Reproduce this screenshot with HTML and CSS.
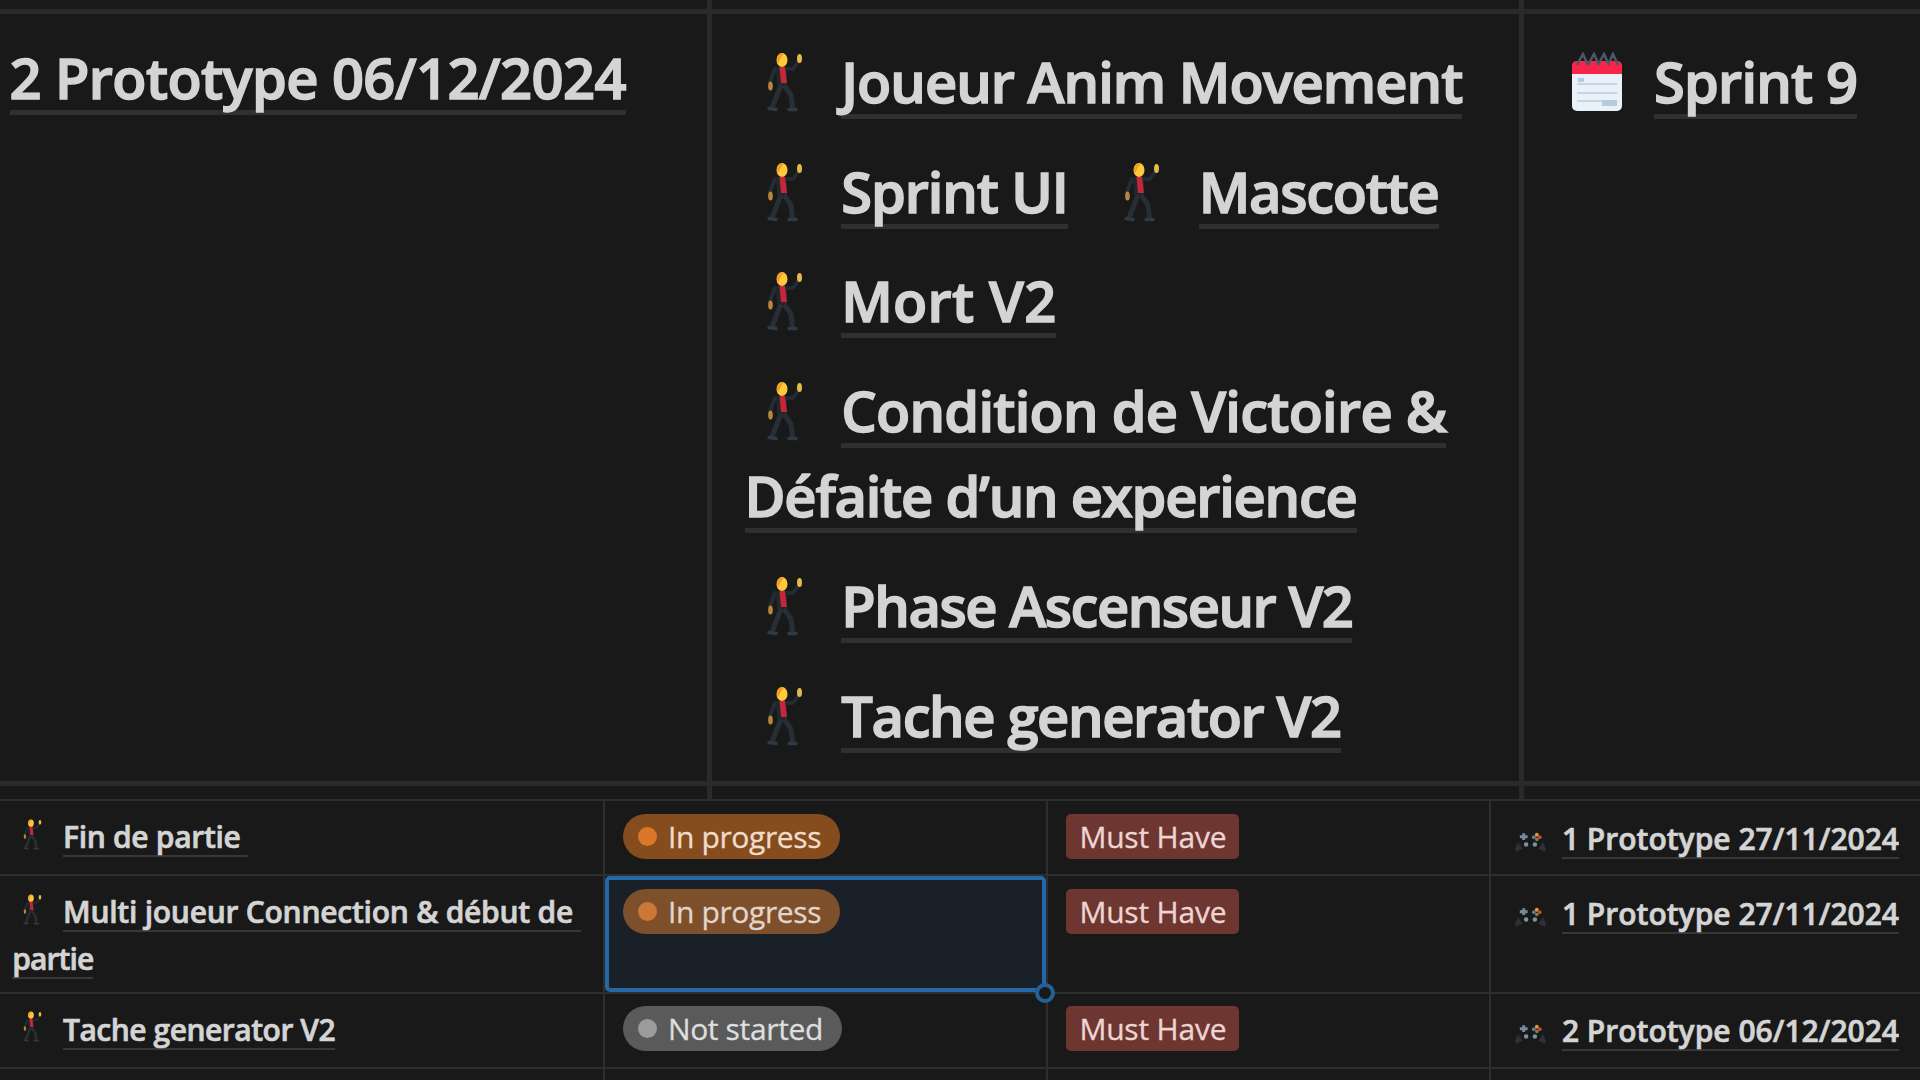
FILE: index.html
```html
<!DOCTYPE html>
<html lang="fr">
<head>
<meta charset="utf-8">
<title>Sprints</title>
<link rel="stylesheet" href="styles.css">
</head>
<body>
<svg class="defs" aria-hidden="true">
  <symbol id="dancer" viewBox="0 0 60 60">
    <path d="M18 17 L12.500 31" stroke="#232c34" stroke-width="4" stroke-linecap="round"/>
    <path d="M29 17 L36 17 L41 10" stroke="#232c34" stroke-width="3.500" fill="none" stroke-linecap="round"/>
    <path d="M19 15 H30 L30 33 H20 Z" fill="#20272d"/>
    <path d="M24 33 L20 43 L15 56 M27 33 L34 43 L35.500 56" stroke="#272e35" stroke-width="5" fill="none"/>
    <path d="M12 56.500 L19 57.500 M32 57.500 L39 57.500" stroke="#303a44" stroke-width="3.500" stroke-linecap="round"/>
    <path d="M22.500 15 H28 L30 31 H24 Z" fill="#c62638"/>
    <ellipse cx="25" cy="8" rx="5.500" ry="7" fill="#ffc83d"/>
    <path d="M20 8 Q20 1 27 1.500 L24 5 L21 12 Z" fill="#f59a23"/>
    <ellipse cx="42.500" cy="6.500" rx="2.500" ry="4.500" fill="#e5ba4a"/>
    <ellipse cx="13.500" cy="34" rx="2.300" ry="4.500" fill="#b9873a"/>
  </symbol>
  <symbol id="calendar" viewBox="0 0 60 60">
    <rect x="5" y="10" width="50" height="49" rx="5" fill="#e9f2fa"/>
    <path d="M5 22 V14 Q5 9 10 9 H50 Q55 9 55 14 V22 Z" fill="#f8254a"/>
    <path d="M10 13 L16 2 L21 13 M21 13 L27 2 L32 13 M31 13 L37 2 L42 13 M41 13 L46 2 L51 13" fill="none" stroke="#4a5965" stroke-width="2.500"/>
    <path d="M11 28 H17" stroke="#b4cbe0" stroke-width="4"/>
    <path d="M10 32 H50 M10 41 H50 M10 49 H35" stroke="#ccd5df" stroke-width="2"/>
    <path d="M35 51 H50" stroke="#b7cbdd" stroke-width="6"/>
  </symbol>
  <symbol id="gamepad" viewBox="0 0 32 20">
    <path d="M3 10 L8 17 L1 20 L0 17 Z M29 10 L24 17 L31 20 L32 17 Z" fill="#2c3139"/>
    <path d="M9 1 V8 M5 4.500 H13" stroke="#758a9b" stroke-width="3"/>
    <circle cx="11.500" cy="12.500" r="2.300" fill="#7d92a2"/>
    <circle cx="20.500" cy="12.500" r="2.300" fill="#7d92a2"/>
    <circle cx="19.500" cy="5" r="2" fill="#557f9c"/>
    <circle cx="22.500" cy="2.500" r="2" fill="#e09a30"/>
    <circle cx="25.500" cy="5" r="2" fill="#cc4a33"/>
    <circle cx="22.500" cy="7.500" r="1.800" fill="#7c8a3c"/>
  </symbol>
</svg>

<main class="page">
  <section class="sprints">
    <div class="cell head"></div><div class="cell head"></div><div class="cell head"></div>
    <div class="cell cell-proto"><span class="link t-milestone">2 Prototype 06/12/2024</span></div>
    <div class="cell cell-tasks">
      <div class="line"><svg class="icon"><use href="#dancer"/></svg><span class="link t-joueur">Joueur Anim Movement</span></div>
      <div class="line"><svg class="icon"><use href="#dancer"/></svg><span class="link t-ui">Sprint UI</span><svg class="icon icon-next"><use href="#dancer"/></svg><span class="link t-mascotte">Mascotte</span></div>
      <div class="line"><svg class="icon"><use href="#dancer"/></svg><span class="link t-mort">Mort V2</span></div>
      <div class="line line-wrapped"><svg class="icon"><use href="#dancer"/></svg><span class="link t-condition">Condition de Victoire &amp;</span></div>
      <div class="line"><span class="link t-defaite">Défaite d’un experience</span></div>
      <div class="line"><svg class="icon"><use href="#dancer"/></svg><span class="link t-phase">Phase Ascenseur V2</span></div>
      <div class="line"><svg class="icon"><use href="#dancer"/></svg><span class="link t-tache">Tache generator V2</span></div>
    </div>
    <div class="cell cell-sprint"><div class="line"><svg class="icon"><use href="#calendar"/></svg><span class="link t-sprint">Sprint 9</span></div></div>
    <div class="cell foot"></div><div class="cell foot"></div><div class="cell foot"></div>
  </section>

  <section class="tasks">
    <div class="tcell name"><div class="line"><svg class="icon"><use href="#dancer"/></svg><span class="link t-fin">Fin de partie </span></div></div>
    <div class="tcell"><span class="pill progress"><i class="dot"></i><span class="label">In progress</span></span></div>
    <div class="tcell"><span class="tag"><span class="label">Must Have</span></span></div>
    <div class="tcell proto"><svg class="pad"><use href="#gamepad"/></svg><span class="link">1 Prototype 27/11/2024</span></div>

    <div class="tcell name"><div class="line"><svg class="icon"><use href="#dancer"/></svg><span class="link t-multi">Multi joueur Connection &amp; début de </span></div><div class="line"><span class="link t-partie">partie</span></div></div>
    <div class="tcell selected"><span class="pill progress"><i class="dot"></i><span class="label">In progress</span></span></div>
    <div class="tcell"><span class="tag"><span class="label">Must Have</span></span></div>
    <div class="tcell proto"><svg class="pad"><use href="#gamepad"/></svg><span class="link">1 Prototype 27/11/2024</span></div>

    <div class="tcell name"><div class="line"><svg class="icon"><use href="#dancer"/></svg><span class="link t-tache-small">Tache generator V2</span></div></div>
    <div class="tcell"><span class="pill idle"><i class="dot"></i><span class="label">Not started</span></span></div>
    <div class="tcell"><span class="tag"><span class="label">Must Have</span></span></div>
    <div class="tcell proto"><svg class="pad"><use href="#gamepad"/></svg><span class="link">2 Prototype 06/12/2024</span></div>

    <div class="tcell"></div><div class="tcell"></div><div class="tcell"></div><div class="tcell"></div>
  </section>
</main>
</body>
</html>
```
FILE: styles.css
```css
*, *::before, *::after { box-sizing: border-box; }
body {
  margin: 0;
  background: #191919;
  color: #d4d4d4;
  font-family: "Open Sans", "Noto Sans", sans-serif;
  overflow: hidden;
}
.defs { display: none; }
.page { width: 1920px; height: 1080px; overflow: hidden; }

/* Sprint overview */
.sprints {
  display: grid;
  grid-template-columns: 712px 812px 396px;
  grid-template-rows: 14px 772px 13px;
  font-size: 56px;
  font-weight: 600;
  -webkit-text-stroke: 1.5px #d4d4d4;
}
.cell { border-right: 5px solid #2a2a2a; border-bottom: 5px solid #2a2a2a; }
.cell:nth-child(3n) { border-right: 0; }
.foot { border-bottom: 0; }
.cell-proto { padding: 30px 0 0 9.500px; }
.cell-tasks { padding: 34px 0 0 32.500px; }
.cell-sprint { padding: 34px 0 0 33px; }
.line { display: flex; align-items: flex-start; }
.sprints .line { height: 109.700px; }
.sprints .line-wrapped { height: 85.200px; }
.link { display: block; white-space: pre; flex: none; }
.sprints .link { line-height: 66px; height: 71px; border-bottom: 5px solid #303030; }
.sprints .t-milestone { width: 616px; }
.icon { flex: none; width: 60px; height: 60px; margin: 4px 24.800px 0 12px; }
.icon-next { margin-left: 46px; }
.cell-sprint .icon { margin: 4px 27px 0 10px; }

/* Tracking per title */
.t-milestone { letter-spacing: -0.590px; }
.t-joueur { letter-spacing: -0.980px; }
.t-ui { letter-spacing: -1.090px; }
.t-mascotte { letter-spacing: -1.260px; }
.t-mort { letter-spacing: 0.230px; }
.t-condition { letter-spacing: -0.740px; }
.t-defaite { letter-spacing: -1.210px; }
.t-phase { letter-spacing: -1.450px; }
.t-tache { letter-spacing: -1.370px; }
.t-sprint { letter-spacing: -0.800px; }
.t-fin { letter-spacing: -0.300px; }
.t-multi { letter-spacing: -0.240px; }
.t-partie { letter-spacing: -0.890px; }
.t-tache-small { letter-spacing: -0.480px; }

/* Task table */
.tasks {
  display: grid;
  grid-template-columns: 605.400px 442.500px 443px 429.100px;
  grid-template-rows: 75.200px 117.400px 75.300px 20px;
  border-top: 2px solid #2e2e2e;
  font-size: 30px;
  font-weight: 600;
  -webkit-text-stroke: 0.700px #d4d4d4;
}
.tcell { position: relative; border-right: 2px solid #2e2e2e; border-bottom: 2px solid #2e2e2e; padding: 12.700px 0 0 18px; }
.tcell:nth-child(4n) { border-right: 0; }
.tasks .link { line-height: 37.300px; height: 39.300px; border-bottom: 2px solid #383838; }
.tasks .name { padding: 17px 0 0 12.200px; }
.tasks .name .line { height: 46.700px; }
.tasks .icon { width: 31px; height: 31px; margin: 0.500px 14px 0 5.800px; }
.tasks .proto { display: flex; align-items: flex-start; padding: 18.600px 0 0 24.500px; }
.pad { flex: none; width: 31px; height: 20px; margin: 12px 15.500px 0 0; }
.label { font-weight: 400; letter-spacing: -0.350px; -webkit-text-stroke: 0.300px currentColor; }
.tag .label { letter-spacing: -0.200px; }
.pill, .tag { display: flex; align-items: center; height: 45px; }
.pill { width: 217px; margin-left: -0.500px; border-radius: 23px; padding-left: 15px; }
.progress { background: #854c1d; color: #f0dccb; }
.idle { width: 219.500px; background: #5a5a5a; color: #dedede; }
.dot { width: 19px; height: 19px; border-radius: 50%; margin-right: 11px; background: #d9782a; }
.idle .dot { background: #9b9b9b; }
.tag { width: 173px; border-radius: 5px; background: #6e3630; color: #ecd5d2; padding-left: 13.500px; }
.selected::before {
  content: "";
  position: absolute;
  inset: 0;
  border: 4px solid #2468a8;
  border-radius: 5px;
  background: rgba(35, 131, 226, 0.07);
}
.selected::after {
  content: "";
  position: absolute;
  right: -9px;
  bottom: -11px;
  width: 20px;
  height: 20px;
  border: 4px solid #22609a;
  border-radius: 50%;
  background: #191919;
  z-index: 2;
}
```
